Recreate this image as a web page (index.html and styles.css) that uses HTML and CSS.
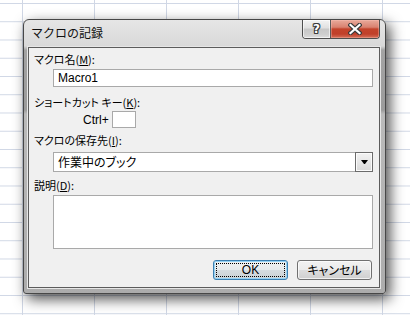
FILE: index.html
```html
<!DOCTYPE html>
<html lang="ja">
<head>
<meta charset="utf-8">
<title>マクロの記録</title>
<link rel="stylesheet" href="styles.css">
</head>
<body>
<div class="window">
  <div class="titlebar">
    <span class="title">マクロの記録</span>
    <div class="caption">
      <div class="cbtn help"><span>?</span></div>
      <div class="cbtn close">
        <svg width="14" height="12" viewBox="0 0 14 12">
          <path d="M2.5 2 L11.5 10 M11.5 2 L2.5 10" stroke="#3b3b3b" stroke-width="4.4" stroke-linecap="square"/>
          <path d="M2.5 2 L11.5 10 M11.5 2 L2.5 10" stroke="#ffffff" stroke-width="2.2" stroke-linecap="square"/>
        </svg>
      </div>
    </div>
  </div>
  <div class="client">
    <div class="label l1">マクロ名(<u>M</u>):</div>
    <div class="textbox name">Macro1</div>
    <div class="label l2">ショートカット キー(<u>K</u>):</div>
    <div class="shortcut"><span class="ctrl">Ctrl+</span><div class="keybox"></div></div>
    <div class="label l3">マクロの保存先(<u>I</u>):</div>
    <div class="combo"><span class="combo-text">作業中のブック</span><div class="drop"><span class="arrow"></span></div></div>
    <div class="label l4">説明(<u>D</u>):</div>
    <div class="textbox desc"></div>
    <div class="buttons">
      <div class="btn ok"><span class="focus">OK</span></div>
      <div class="btn cancel">キャンセル</div>
    </div>
  </div>
</div>
</body>
</html>
```
FILE: styles.css
```css
html, body {
  margin: 0;
  height: 100%;
}
body {
  box-sizing: border-box;
  padding: 19px 0 0 23px;
  background-color: #ffffff;
  background-image:
    linear-gradient(to right, #d0d7e5 1px, transparent 1px),
    linear-gradient(to bottom, #d0d7e5 1px, transparent 1px);
  background-size: 72px 100%, 100% 18.25px;
  background-position: 22px 0, 0 3px;
  font-family: "Liberation Sans", "Noto Sans CJK JP", sans-serif;
  color: #000;
  overflow: hidden;
}
.window {
  box-sizing: border-box;
  width: 363px;
  height: 275px;
  border: 1px solid #474747;
  border-radius: 6px 6px 3px 3px;
  padding: 0 5px 5px 4px;
  display: flex;
  flex-direction: column;
  background: linear-gradient(to bottom, #e6e6e6 0, #d9d9d9 26px, #a3a3a3 30px, #9b9b9b 90px, #bababa 94px, #acacac 100%);
  box-shadow: 4px 5px 14px rgba(0, 0, 0, 0.7);
}
.titlebar {
  height: 27px;
  display: flex;
  align-items: flex-start;
}
.title {
  flex: 1;
  font-family: "Noto Sans CJK JP", sans-serif;
  font-size: 12px;
  line-height: 16px;
  margin-top: 5px;
  padding-left: 3px;
  color: #111;
}
.caption {
  display: flex;
  height: 18px;
  border: 1px solid #4e4e4e;
  border-top: none;
  border-radius: 0 0 4px 4px;
  overflow: hidden;
}
.cbtn {
  height: 18px;
  display: flex;
  align-items: center;
  justify-content: center;
}
.help {
  width: 27px;
  border-right: 1px solid #5a5a5a;
  background: linear-gradient(to bottom, #f3f3f3 0, #e0e0e0 45%, #c7c7c7 50%, #cfcfcf 80%, #dedede 100%);
  box-shadow: inset 0 0 0 1px rgba(255, 255, 255, 0.6);
}
.help span {
  font-family: "DejaVu Sans", sans-serif;
  font-weight: bold;
  font-size: 12px;
  line-height: 14px;
  color: #fff;
  text-shadow: 1px 0 0 #3b3b3b, -1px 0 0 #3b3b3b, 0 1px 0 #3b3b3b, 0 -1px 0 #3b3b3b, 1px 1px 0 #3b3b3b, -1px -1px 0 #3b3b3b, 1px -1px 0 #3b3b3b, -1px 1px 0 #3b3b3b;
}
.close {
  width: 48px;
  background: linear-gradient(to bottom, #e9aa9b 0, #d98270 40%, #c3432b 50%, #c0402a 78%, #d5705a 100%);
  box-shadow: inset 0 0 0 1px rgba(255, 200, 190, 0.35);
}
.client {
  flex: 1;
  border: 1px solid #5c5c5c;
  box-shadow: 0 0 0 1px #e6e6e6;
  background: #f0f0f0;
  display: flex;
  flex-direction: column;
  align-items: flex-start;
}
.label {
  font-family: "Noto Sans CJK JP", sans-serif;
  font-feature-settings: "palt";
  font-size: 11px;
  line-height: 14px;
  margin-left: 5px;
  white-space: nowrap;
}
.label u {
  text-underline-offset: 1px;
}
.l1 { margin-top: 4px; }
.l2 { margin-top: 8px; }
.l3 { margin-top: 5px; }
.l4 { margin-top: 6px; }
.textbox {
  box-sizing: border-box;
  width: 320px;
  margin-left: 24px;
  background: #fff;
  border: 1px solid #a9a9a9;
}
.name {
  height: 18px;
  margin-top: 3px;
  padding-left: 4px;
  font-size: 12px;
  line-height: 16px;
}
.desc {
  height: 54px;
  margin-top: 3px;
}
.shortcut {
  display: flex;
  align-items: center;
  margin-top: 2px;
  margin-left: 54px;
  height: 17px;
}
.ctrl {
  font-size: 12px;
  line-height: 14px;
  margin-right: 3px;
}
.keybox {
  box-sizing: border-box;
  width: 24px;
  height: 17px;
  background: #fff;
  border: 1px solid #a9a9a9;
}
.combo {
  box-sizing: border-box;
  display: flex;
  align-items: center;
  width: 320px;
  height: 20px;
  margin: 5px 0 0 24px;
  background: #fff;
  border: 1px solid #a9a9a9;
}
.combo-text {
  flex: 1;
  padding-left: 4px;
  font-family: "Noto Sans CJK JP", sans-serif;
  font-feature-settings: "palt";
  font-size: 12px;
  line-height: 16px;
}
.drop {
  box-sizing: border-box;
  align-self: stretch;
  width: 18px;
  margin: -1px -1px -1px 0;
  border: 1px solid #6b6b6b;
  box-shadow: inset 0 0 0 1px #fbfbfb;
  background: linear-gradient(to bottom, #f2f2f2 0, #e6e6e6 50%, #d9d9d9 100%);
  display: flex;
  align-items: center;
  justify-content: center;
}
.arrow {
  width: 1px;
  height: 0;
  border-left: 3px solid transparent;
  border-right: 3px solid transparent;
  border-top: 4px solid #000;
}
.buttons {
  align-self: stretch;
  display: flex;
  justify-content: flex-end;
  gap: 9px;
  margin-top: 11px;
  padding-right: 7px;
}
.btn {
  box-sizing: border-box;
  width: 75px;
  height: 20px;
  border: 1px solid #707070;
  border-radius: 3px;
  background: linear-gradient(to bottom, #f2f2f2 0, #ebebeb 50%, #dddddd 51%, #cfcfcf 100%);
  box-shadow: inset 0 0 0 1px rgba(255, 255, 255, 0.7);
  display: flex;
  align-items: center;
  justify-content: center;
  font-family: "Noto Sans CJK JP", sans-serif;
  font-feature-settings: "palt";
  font-size: 12px;
  line-height: 14px;
}
.ok {
  border-color: #3c7fb1;
  box-shadow: inset 0 0 0 1px #94d2f5;
  background: linear-gradient(to bottom, #eaf6fd 0, #d9f0fc 50%, #bee6fd 51%, #a7d9f5 100%);
  background: linear-gradient(to bottom, #f0f2f3 0, #e6eaec 50%, #d6dce0 51%, #cbd2d6 100%);
  padding: 2px;
}
.focus {
  box-sizing: border-box;
  flex: 1;
  align-self: stretch;
  border: 1px dotted #000;
  display: flex;
  align-items: center;
  justify-content: center;
  font-family: "Liberation Sans", sans-serif;
}
```
